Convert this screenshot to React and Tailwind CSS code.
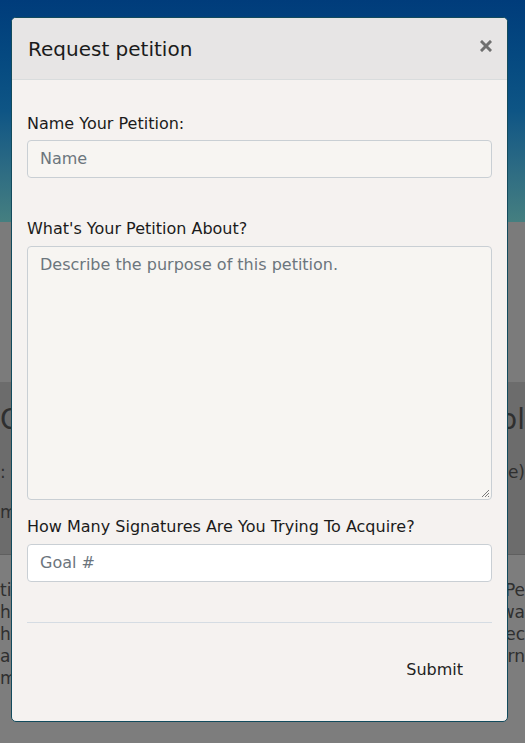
import React from "react";

export default function App() {
  const font = { fontFamily: '"DejaVu Sans", sans-serif' };
  return (
    <div className="relative w-[525px] h-[743px] overflow-hidden bg-[#7d7d7d]" style={font}>
      {/* dimmed background page */}
      <div className="h-[222px] bg-gradient-to-b from-[#003c7b] via-[#0e5585] to-[#457f80]" />
      <div className="h-[160px] bg-[#7b7b7b]" />
      <div className="h-[173px] bg-[#6c6c6c] border-b border-[#5f5f5f] text-[#2f2f2f] overflow-hidden">
        <div className="flex justify-between mt-[20px] text-[28px] leading-[36px] whitespace-nowrap">
          <span>Open Petitions</span>
          <span>Closed Pol</span>
        </div>
        <div className="flex justify-between mt-[22px] text-[17px] leading-[24px] whitespace-nowrap">
          <span>: Filter by name</span>
          <span>(active)</span>
        </div>
        <div className="flex justify-between mt-[16px] text-[17px] leading-[24px] whitespace-nowrap">
          <span>more results</span>
          <span></span>
        </div>
      </div>
      <div className="flex flex-col pt-[24px] text-[17px] leading-[22px] text-[#2f2f2f] whitespace-nowrap">
        <div className="flex justify-between"><span>tion for the city</span><span>a Pe</span></div>
        <div className="flex justify-between"><span>hear our voices</span><span>wa</span></div>
        <div className="flex justify-between"><span>his new park</span><span>ec</span></div>
        <div className="flex justify-between"><span>ar the street</span><span>rn</span></div>
        <div className="flex justify-between"><span>more info</span><span></span></div>
      </div>

      {/* modal */}
      <div className="absolute left-[11px] top-[17px] w-[497px] h-[705px] rounded-[5px] border border-[#124b5d] bg-[#f5f2f0] overflow-hidden flex flex-col">
        <div className="h-[62px] shrink-0 bg-[#e7e5e5] border-b border-[#d9dcdd] flex items-center justify-between pl-[16px] pr-[15px]">
          <span className="text-[20px] text-[#1b1b1b]">Request petition</span>
          <svg width="12" height="12" viewBox="0 0 12 12" className="mb-[6px]">
            <path d="M2 2 L10 10 M10 2 L2 10" stroke="#6f6f6f" strokeWidth="3" strokeLinecap="square" />
          </svg>
        </div>
        <div className="px-[15px] pt-[34px] flex flex-col text-[16px] text-[#1b1b1b]">
          <label className="leading-[20px]">Name Your Petition:</label>
          <div className="mt-[6px] h-[38px] rounded-[4px] border border-[#c9cfd4] bg-[#f7f5f2] flex items-center pl-[12px] text-[#6c757d]">Name</div>
          <label className="mt-[41px] leading-[20px]">What's Your Petition About?</label>
          <div className="relative mt-[7px] h-[254px] rounded-[4px] border border-[#c9cfd4] bg-[#f7f5f2] pl-[12px] pt-[6px] text-[#6c757d]">
            Describe the purpose of this petition.
            <svg width="9" height="9" viewBox="0 0 9 9" className="absolute right-[1px] bottom-[1px]">
              <path d="M8 1 L1 8 M8 4 L4 8 M8 7 L7 8" stroke="#7a7a7a" strokeWidth="1" />
            </svg>
          </div>
          <label className="mt-[17px] leading-[20px]">How Many Signatures Are You Trying To Acquire?</label>
          <div className="mt-[7px] h-[38px] rounded-[4px] border border-[#c9cfd4] bg-white flex items-center pl-[12px] text-[#6c757d]">Goal #</div>
          <div className="mt-[40px] h-px bg-[#d5dce3]" />
          <div className="flex justify-end mt-[35px] pr-[29px]">
            <span className="text-[#222]">Submit</span>
          </div>
        </div>
      </div>
    </div>
  );
}
